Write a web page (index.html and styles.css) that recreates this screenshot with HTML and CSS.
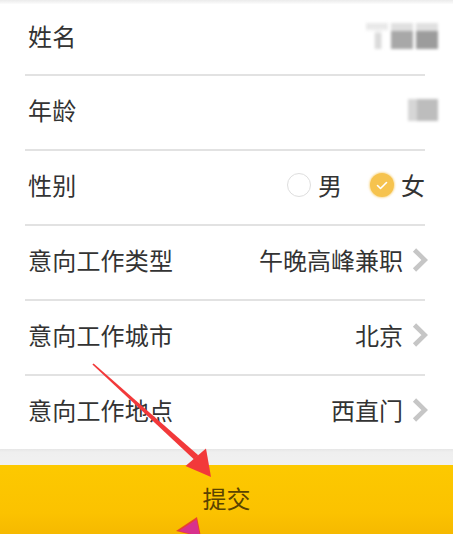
FILE: index.html
```html
<!DOCTYPE html>
<html lang="zh">
<head>
<meta charset="utf-8">
<title>报名</title>
<link rel="stylesheet" href="styles.css">
</head>
<body>
<div class="page">
  <div class="top-edge"></div>
  <div class="form">
    <div class="row">
      <span class="label">姓名</span>
      <span class="masked masked-name"><i class="m1"></i><i class="m2"></i><i class="m3"></i></span>
    </div>
    <div class="divider"></div>
    <div class="row">
      <span class="label">年龄</span>
      <span class="masked masked-age"><i class="m4"></i></span>
    </div>
    <div class="divider"></div>
    <div class="row">
      <span class="label">性别</span>
      <div class="radios">
        <span class="radio"><span class="dot"></span><span class="opt">男</span></span>
        <span class="radio checked"><span class="dot"><svg viewBox="0 0 24 24" width="24" height="24"><path d="M7.5 12.5 L10.5 15.5 L16.5 9.5" fill="none" stroke="#fff" stroke-width="1.6" stroke-linecap="round" stroke-linejoin="round"/></svg></span><span class="opt">女</span></span>
      </div>
    </div>
    <div class="divider"></div>
    <div class="row">
      <span class="label">意向工作类型</span>
      <span class="value">午晚高峰兼职</span>
      <svg class="chev" viewBox="0 0 16 24" width="16" height="24"><path d="M2.5 2 L12.8 12 L2.5 22" fill="none" stroke="#c6c6c6" stroke-width="4.6"/></svg>
    </div>
    <div class="divider"></div>
    <div class="row">
      <span class="label">意向工作城市</span>
      <span class="value">北京</span>
      <svg class="chev" viewBox="0 0 16 24" width="16" height="24"><path d="M2.5 2 L12.8 12 L2.5 22" fill="none" stroke="#c6c6c6" stroke-width="4.6"/></svg>
    </div>
    <div class="divider"></div>
    <div class="row">
      <span class="label">意向工作地点</span>
      <span class="value">西直门</span>
      <svg class="chev" viewBox="0 0 16 24" width="16" height="24"><path d="M2.5 2 L12.8 12 L2.5 22" fill="none" stroke="#c6c6c6" stroke-width="4.6"/></svg>
    </div>
  </div>
  <div class="gap-band"></div>
  <div class="submit">提交</div>

  <svg class="annot" viewBox="0 0 453 534" width="453" height="534">
    <polygon points="92.4,364.6 93.6,363.4 198.3,455.2 194.1,459.4" fill="#f2393a"/>
    <polygon points="185.5,466 206,448.5 211,477" fill="#f2393a"/>
    <polygon points="197,517 176,531 201,537" fill="#e8432f"/>
    <polygon points="196.5,519.5 179,531 200,536" fill="#d8318d"/>
  </svg>
</div>
</body>
</html>
```
FILE: styles.css
```css
* { box-sizing: border-box; }
html, body {
  margin: 0;
  padding: 0;
  background: #ffffff;
}
body {
  font-family: "Noto Sans CJK SC", "Noto Sans", sans-serif;
  color: #333333;
  width: 453px;
  height: 534px;
  overflow: hidden;
}
.page {
  position: relative;
  width: 453px;
  height: 534px;
  overflow: hidden;
}
.top-edge {
  height: 4px;
  background: linear-gradient(#ebebeb, #fcfcfc);
}
.form {
  background: #fff;
}
.row {
  height: 73px;
  display: flex;
  align-items: center;
  padding: 0 25px 6px 28px;
  font-size: 24px;
  line-height: 1;
}
.row:first-child {
  height: 70px;
}
.label {
  flex: 1;
  color: #333;
  letter-spacing: 0.2px;
}
.value {
  color: #333;
}
.chev {
  margin-left: 9px;
  flex: none;
}
.divider {
  height: 2px;
  margin: 0 28px 0 25px;
  background: #e2e2e2;
}
.masked {
  display: flex;
  gap: 3px;
  margin-right: -10px;
  filter: blur(1.5px);
}
.masked i {
  display: block;
  height: 26px;
}
.m1 { width: 22px; background: linear-gradient(#e9e9e9 0 25%, #f2f2f2 25% 40%, #dadada 40% 100%); clip-path: polygon(0 0,100% 0,100% 30%,70% 30%,70% 100%,40% 100%,40% 30%,0 30%); }
.m2 { width: 22px; background: linear-gradient(#e0e0e0 0 30%, #a8a8a8 30% 100%); }
.m3 { width: 22px; background: linear-gradient(#e0e0e0 0 30%, #9c9c9c 30% 100%); }
.m4 { width: 30px; height: 22px !important; background: linear-gradient(90deg, #d6d6d6 0 30%, #bdbdbd 30% 100%); }
.radios {
  display: flex;
  align-items: center;
  gap: 28px;
  margin-right: 3px;
}
.radio {
  display: flex;
  align-items: center;
  gap: 7px;
}
.dot {
  width: 24px;
  height: 24px;
  border-radius: 50%;
  border: 1.5px solid #dedede;
  background: #fff;
  display: flex;
  align-items: center;
  justify-content: center;
}
.dot svg { display: block; flex: none; }
.checked .dot {
  border: none;
  background: #f6c34e;
  box-shadow: 0 0 2px 1px rgba(246, 195, 78, 0.55);
}
.opt { color: #333; }
.gap-band {
  height: 16px;
  background: linear-gradient(#e6e6e6, #efefef 20%, #f1f1f1);
}
.submit {
  height: 69px;
  display: flex;
  align-items: center;
  justify-content: center;
  padding-bottom: 5px;
  font-size: 24px;
  color: #5a4300;
  background: linear-gradient(#fdc900, #fbc200 70%, #f6b900);
}
.annot {
  position: absolute;
  left: 0;
  top: 0;
  pointer-events: none;
}
```
